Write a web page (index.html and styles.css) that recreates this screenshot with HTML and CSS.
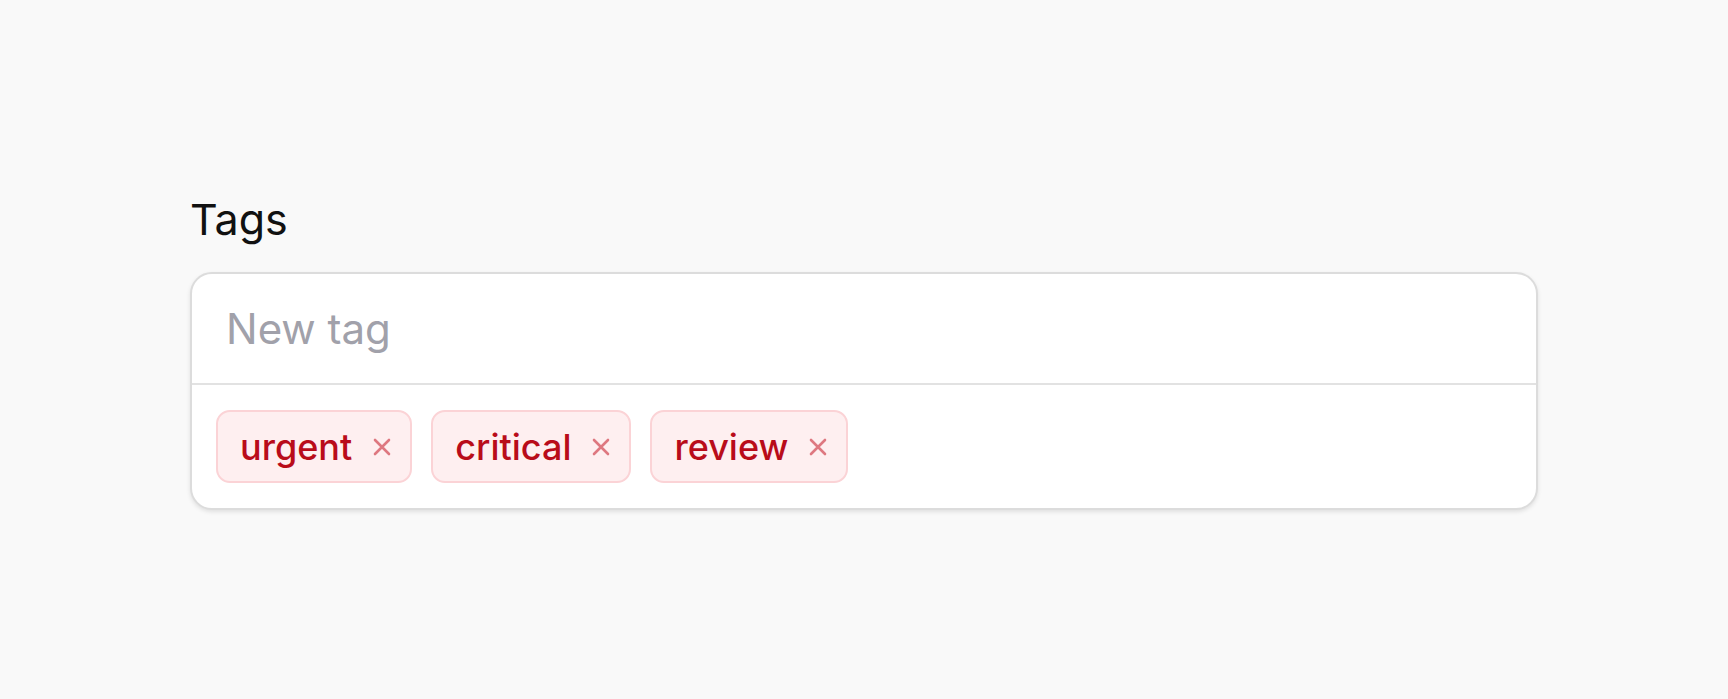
FILE: index.html
```html
<!DOCTYPE html>
<html>
<head>
  <link rel="stylesheet" href="styles.css">
</head>
<body>
  <div class="field">
    <label class="field-label" for="tag-input">Tags</label>
    <div class="tag-box">
      <input class="tag-input" id="tag-input" type="text" placeholder="New tag">
      <div class="tag-list">
        <span class="tag">urgent
          <button class="tag-remove" aria-label="Remove urgent">
            <svg viewBox="0 0 20 20" width="20" height="20"><path d="M3 3L17 17M17 3L3 17"/></svg>
          </button>
        </span>
        <span class="tag">critical
          <button class="tag-remove" aria-label="Remove critical">
            <svg viewBox="0 0 20 20" width="20" height="20"><path d="M3 3L17 17M17 3L3 17"/></svg>
          </button>
        </span>
        <span class="tag">review
          <button class="tag-remove" aria-label="Remove review">
            <svg viewBox="0 0 20 20" width="20" height="20"><path d="M3 3L17 17M17 3L3 17"/></svg>
          </button>
        </span>
      </div>
    </div>
  </div>
</body>
</html>
```
FILE: styles.css
```css
* {
  margin: 0;
  padding: 0;
  box-sizing: border-box;
  font-family: Inter, "Noto Sans", sans-serif;
}

body {
  min-height: 100vh;
  display: flex;
  align-items: center;
  justify-content: center;
  background-color: #f9f9f9;
  padding-top: 5px;
}

.field {
  width: 1348px;
  display: flex;
  flex-direction: column;
}

.field-label {
  font-size: 43px;
  line-height: 50px;
  color: #111;
  margin-bottom: 28px;
}

.tag-box {
  background-color: white;
  border: 2px solid #dcdcdc;
  border-radius: 22px;
  box-shadow: 0 2px 4px rgba(0, 0, 0, 0.1);
  overflow: hidden;
}

.tag-input {
  display: block;
  width: 100%;
  height: 109px;
  border: none;
  outline: none;
  padding: 0 34px;
  font-size: 42px;
  color: #111;
  background: transparent;
}

.tag-input::placeholder {
  color: #a1a1aa;
}

.tag-list {
  display: flex;
  gap: 19px;
  padding: 25px 24px;
  border-top: 2px solid #e2e2e2;
}

.tag {
  display: flex;
  align-items: center;
  gap: 20px;
  height: 73px;
  padding: 0 18px 0 22px;
  background-color: #feeff0;
  border: 2px solid #fbd3d6;
  border-radius: 14px;
  font-size: 36px;
  font-weight: 500;
  color: #b90c1a;
}

.tag-remove {
  display: flex;
  border: none;
  background: none;
  cursor: pointer;
}

.tag-remove svg {
  stroke: #de7880;
  stroke-width: 2.6;
  stroke-linecap: round;
  fill: none;
}
```
